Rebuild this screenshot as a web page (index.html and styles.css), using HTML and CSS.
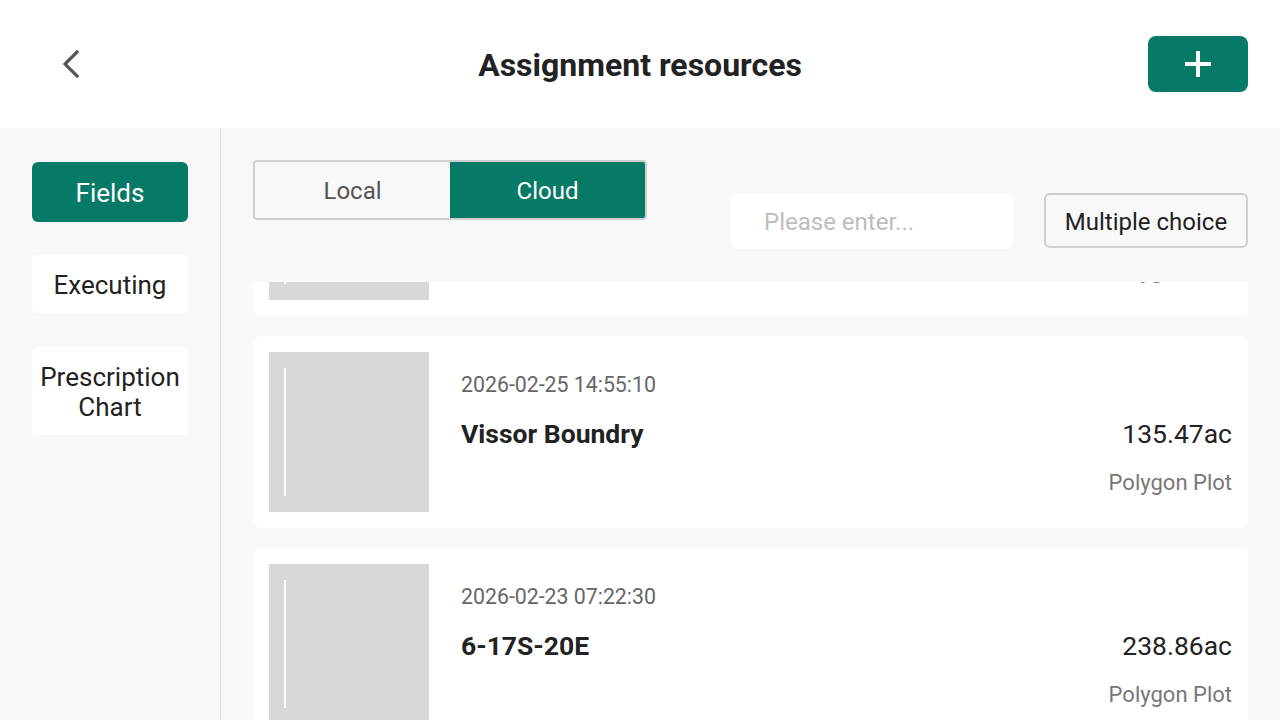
FILE: index.html
```html
<!DOCTYPE html>
<html lang="en">
<head>
<meta charset="utf-8">
<title>Assignment resources</title>
<link rel="stylesheet" href="styles.css">
</head>
<body>
<div class="app">
  <header class="topbar">
    <button class="back" aria-label="Back">
      <svg width="24" height="32" viewBox="0 0 24 32"><path d="M17 4 L5 16 L17 28" fill="none" stroke="#555" stroke-width="3.2" stroke-linecap="square" stroke-linejoin="miter"/></svg>
    </button>
    <h1 class="title">Assignment resources</h1>
    <button class="add" aria-label="Add">
      <svg width="28" height="28" viewBox="0 0 28 28"><path d="M14 1 V27 M1 14 H27" stroke="#fff" stroke-width="4"/></svg>
    </button>
  </header>
  <div class="body">
    <nav class="sidebar">
      <button class="side-btn active">Fields</button>
      <button class="side-btn">Executing</button>
      <button class="side-btn tall">Prescription<br>Chart</button>
    </nav>
    <main class="main">
      <div class="toolbar">
        <div class="tabs">
          <button class="tab">Local</button>
          <button class="tab on">Cloud</button>
        </div>
        <div class="filters">
          <input class="search" type="text" placeholder="Please enter...">
          <button class="multi">Multiple choice</button>
        </div>
      </div>
      <div class="list">
        <div class="list-inner">
          <div class="card">
            <div class="thumb"><span class="edge"></span></div>
            <div class="info">
              <div class="date">2026-02-27 09:12:44</div>
              <div class="name">North Pivot</div>
              <div class="area">84.20ac</div>
              <div class="kind">Polygon Plot</div>
            </div>
          </div>
          <div class="card">
            <div class="thumb"><span class="edge"></span></div>
            <div class="info">
              <div class="date">2026-02-25 14:55:10</div>
              <div class="name">Vissor Boundry</div>
              <div class="area">135.47ac</div>
              <div class="kind">Polygon Plot</div>
            </div>
          </div>
          <div class="card">
            <div class="thumb"><span class="edge"></span></div>
            <div class="info">
              <div class="date">2026-02-23 07:22:30</div>
              <div class="name">6-17S-20E</div>
              <div class="area">238.86ac</div>
              <div class="kind">Polygon Plot</div>
            </div>
          </div>
        </div>
      </div>
    </main>
  </div>
</div>
</body>
</html>
```
FILE: styles.css
```css
* { box-sizing: border-box; }
html, body { margin: 0; padding: 0; }
body {
  width: 1280px;
  height: 720px;
  overflow: hidden;
  font-family: Roboto, "Noto Sans", sans-serif;
  color: #222;
  background: #f8f8f8;
}
button, input { font-family: inherit; }
.app { display: flex; flex-direction: column; height: 720px; }
.topbar {
  height: 128px;
  flex: none;
  background: #fff;
  display: grid;
  grid-template-columns: 1fr auto 1fr;
  align-items: center;
  padding: 0 32px 0 60px;
}
.back {
  justify-self: start;
  border: 0; background: none; padding: 0;
  width: 24px; height: 32px;
  display: flex; align-items: center; justify-content: center;
}
.title {
  margin: 2px 0 0 -28px;
  font-size: 32px;
  font-weight: 700;
  color: #222;
  line-height: 40px;
}
.add {
  justify-self: end;
  width: 100px; height: 56px;
  border: 0; border-radius: 8px;
  background: #067a66;
  display: flex; align-items: center; justify-content: center;
}
.body { flex: 1; display: flex; min-height: 0; }
.sidebar {
  width: 221px;
  flex: none;
  border-right: 1px solid #dedede;
  padding: 34px 32px 0 32px;
  display: flex;
  flex-direction: column;
  gap: 32px;
}
.side-btn {
  width: 156px;
  height: 60px;
  border: 0;
  border-radius: 6px;
  background: #fff;
  color: #222;
  font-size: 26px;
  line-height: 30px;
  padding: 2px 0 0;
}
.side-btn.tall { height: 88px; margin-top: 1px; }
.side-btn.active { background: #067a66; color: #fff; }
.main {
  flex: 1;
  display: flex;
  flex-direction: column;
  padding: 32px 32px 0 32px;
  min-width: 0;
}
.toolbar {
  display: flex;
  justify-content: space-between;
  align-items: flex-start;
  height: 89px;
  flex: none;
}
.tabs {
  display: flex;
  border: 2px solid #cfcfcf;
  border-radius: 4px;
  width: 394px;
  height: 60px;
}
.tab {
  flex: 1;
  border: 0;
  background: #f8f8f8;
  color: #555;
  font-size: 24px;
  line-height: 28px;
  padding: 2px 0 0;
  border-radius: 2px 0 0 2px;
}
.tab.on { background: #067a66; color: #fff; border-radius: 0 2px 2px 0; }
.filters {
  display: flex;
  gap: 31px;
  align-items: flex-start;
  margin-top: 33px;
}
.search {
  width: 282px;
  height: 55px;
  margin-top: 1px;
  border: 0;
  border-radius: 8px;
  background: #fff;
  padding: 0 33px;
  font-size: 24px;
  color: #222;
  outline: none;
}
.search::placeholder { color: #bdbdbd; }
.multi {
  width: 204px;
  height: 55px;
  border: 2px solid #cfcfcf;
  border-radius: 6px;
  background: #f8f8f8;
  color: #222;
  font-size: 24px;
  line-height: 28px;
  padding: 2px 0 0;
}
.list {
  flex: 1;
  overflow: hidden;
  margin-top: 33px;
}
.list-inner {
  margin-top: -158px;
  display: flex;
  flex-direction: column;
  gap: 20px;
}
.card {
  background: #fff;
  border-radius: 8px;
  padding: 16px;
  display: flex;
  height: 192px;
  flex: none;
}
.thumb {
  width: 160px;
  height: 160px;
  flex: none;
  background: #d8d8d8;
  padding: 16px 0 16px 15px;
  display: flex;
}
.edge { width: 2px; background: #fff; }
.info {
  flex: 1;
  margin-left: 32px;
  padding-top: 8px;
  display: grid;
  grid-template-columns: 1fr auto;
  grid-template-rows: 49px 49px 49px;
  align-items: center;
}
.date { grid-column: 1; grid-row: 1; font-size: 21.3px; color: #666; }
.name { grid-column: 1; grid-row: 2; font-size: 26.5px; font-weight: 700; color: #222; }
.area { grid-column: 2; grid-row: 2; font-size: 26.5px; color: #222; text-align: right; }
.kind { grid-column: 2; grid-row: 3; font-size: 22px; color: #777; text-align: right; }
```
